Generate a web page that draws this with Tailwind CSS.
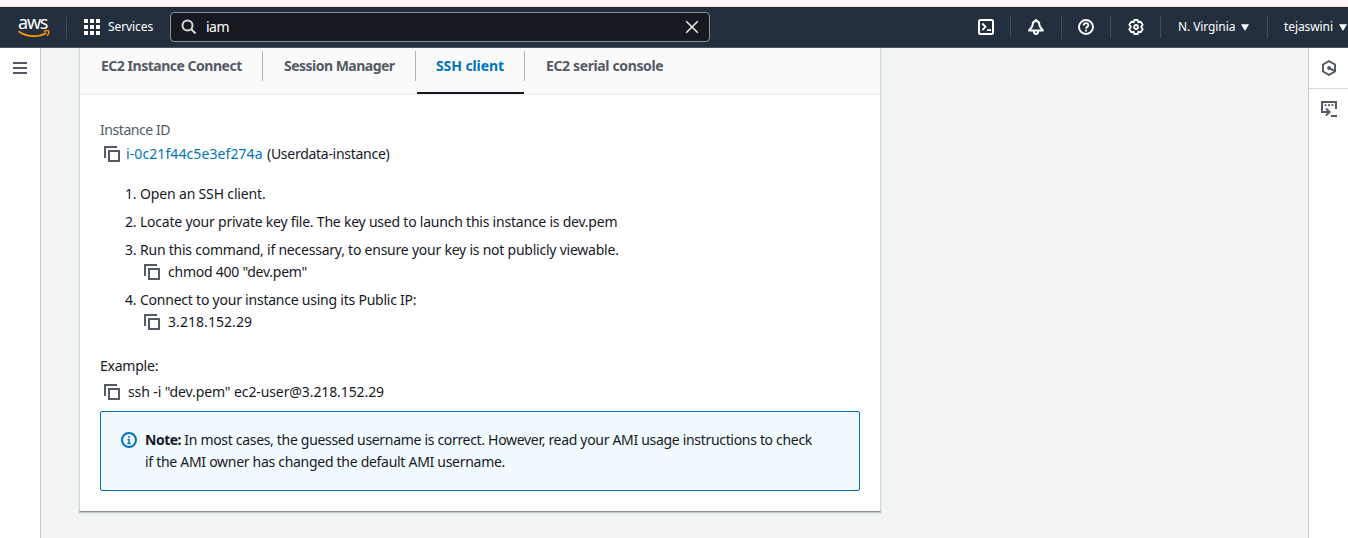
<!DOCTYPE html>
<html lang="en">
<head>
<meta charset="utf-8">
<title>Connect to instance</title>
<script src="https://cdn.jsdelivr.net/npm/@tailwindcss/browser@4"></script>
</head>
<body class="flex h-[538px] flex-col overflow-hidden bg-[#f2f3f3] font-['Noto_Sans','Open_Sans',sans-serif] text-sm leading-[22px] tracking-[-0.23px] text-[#16191f]">
<svg class="hidden">
  <symbol id="copy" viewBox="0 0 16 16"><path d="M1 12V1h12M5 5h10v10H5z" fill="none" stroke="#545b64" stroke-width="2"/></symbol>
</svg>

<div class="h-[7px] shrink-0 border-b border-[#f3e0cb] bg-[#fff7f5]"></div>

<header class="flex h-[41px] shrink-0 items-center border-b border-[#4b5563] bg-[#232f3e] text-xs tracking-[-0.09px] text-white">
  <div class="flex h-full w-[66px] shrink-0 flex-col pl-[18px] pt-[7px]">
    <span class="h-[16px] text-[18px] leading-[16px] tracking-[-1.2px]">aws</span>
    <svg class="-mt-[0.5px] h-[8px] w-[32px]" viewBox="0 0 32 8" fill="none" stroke="#f90"><path d="M.5 1.300C8.500 7.300 20 7.600 28.300 3" stroke-width="1.700"/><path d="M25.800 1.400c2-.8 4.400-.9 4.900-.2.300.9-.3 3.200-1.600 4.700" stroke-width="1.400"/></svg>
  </div>
  <div class="mt-px h-[22px] w-px shrink-0 bg-[#414d5c]"></div>
  <svg class="ml-[17px] h-4 w-4 shrink-0" viewBox="0 0 16 16" fill="#fff"><path d="M0 0h4v4H0zM6 0h4v4H6zM12 0h4v4h-4zM0 6h4v4H0zM6 6h4v4H6zM12 6h4v4h-4zM0 12h4v4H0zM6 12h4v4H6zM12 12h4v4h-4z"/></svg>
  <span class="ml-2 w-[62px] shrink-0">Services</span>
  <div class="flex h-[30px] w-[540px] shrink-0 items-center rounded-sm border border-[#879596] bg-[#16191f]">
    <svg class="ml-[10px] h-4 w-4" viewBox="0 0 16 16" fill="none" stroke="#d5dbdb" stroke-width="2"><circle cx="6.500" cy="6.500" r="5"/><path d="m10 10 4.500 4.500"/></svg>
    <span class="ml-[9px] flex-1 text-sm tracking-[-0.5px]">iam</span>
    <svg class="mr-[10px] h-[14px] w-[14px]" viewBox="0 0 14 14" fill="none" stroke="#e4e8e8" stroke-width="1.600"><path d="m1.200 1.200 11.600 11.600m0-11.600L1.200 12.800"/></svg>
  </div>
  <div class="ml-[268px] flex shrink-0 items-center">
    <svg class="h-4 w-4" viewBox="0 0 16 16" fill="none" stroke="#fff" stroke-width="2"><rect x="1" y="1" width="14" height="14" rx="1.500"/><path d="M4.300 4.500 7.500 7.800 4.300 11.200M9 11.200h4" stroke-width="1.800"/></svg>
    <div class="ml-4 h-[22px] w-px bg-[#414d5c]"></div>
    <svg class="ml-[17px] h-4 w-4" viewBox="0 0 16 16" fill="none" stroke="#fff" stroke-width="2" stroke-linejoin="round"><path d="M8 2C5.600 2 4.700 3.800 4.700 5.500 4.700 7.800 3 9 1 11.500h14C13 9 11.300 7.800 11.300 5.500 11.300 3.800 10.400 2 8 2z"/><path d="M8 0v2M5.800 12c0 4 4.400 4 4.400 0" stroke-width="1.800"/></svg>
    <div class="ml-[17px] h-[24px] w-px bg-[#414d5c]"></div>
    <svg class="ml-4 h-4 w-4" viewBox="0 0 16 16" fill="none" stroke="#fff" stroke-width="1.900"><circle cx="8" cy="8" r="7"/><path d="M5.700 6.500C5.700 3.300 10.400 3.500 10.400 6.200 10.400 8 8 7.800 8 9.800M8 10.700v1.800"/></svg>
    <div class="ml-4 h-[22px] w-px bg-[#414d5c]"></div>
    <svg class="ml-[17px] h-4 w-4" viewBox="0 0 16 16" fill="none" stroke="#fff" stroke-width="1.800" stroke-linejoin="round"><path d="M6.300 1h3.400l.6 2.300L12.700 2.700 14.700 5.700 13.100 8l1.600 2.300-2 3-2.400-.6L9.700 15H6.300l-.6-2.300-2.400.6-2-3L2.900 8 1.300 5.700l2-3 2.400.6z"/><circle cx="8" cy="8" r="2"/></svg>
    <div class="ml-4 h-[22px] w-px bg-[#414d5c]"></div>
    <span class="ml-[17px] w-[63px] whitespace-nowrap">N. Virginia</span>
    <svg class="h-[7px] w-[8px]" viewBox="0 0 8 7"><path d="M0 .3h8L4 7z" fill="#fff"/></svg>
    <div class="ml-[18px] h-[22px] w-px bg-[#414d5c]"></div>
    <span class="ml-4 w-[55px]">tejaswini</span>
    <svg class="h-[7px] w-[8px]" viewBox="0 0 8 7"><path d="M0 .3h8L4 7z" fill="#fff"/></svg>
  </div>
</header>

<div class="flex min-h-0 flex-1">
  <nav class="flex w-[41px] shrink-0 justify-center border-r border-[#c5cccc] bg-white pt-[14px]">
    <svg class="h-3 w-[14px]" viewBox="0 0 14 12" fill="#545b64"><path d="M0 0h14v2H0zM0 5h14v2H0zM0 10h14v2H0z"/></svg>
  </nav>

  <main class="flex-1 pl-[38px]">
    <section class="h-[464px] w-[802px] border-x border-b border-x-[#cfd4d5] border-b-[#879596] bg-white shadow-[0_1px_1px_rgba(0,28,36,0.2)]">
      <div class="flex h-[47px] border-b border-[#eaeded] bg-[#fafafa] font-bold text-[#545b64]">
        <div class="w-[182px] pl-[21px] pt-[7px] tracking-[-0.48px]">EC2 Instance Connect</div>
        <div class="mt-[3px] h-[30px] w-px bg-[#aab7b8]"></div>
        <div class="w-[152px] pl-[21px] pt-[7px] tracking-[-0.52px]">Session Manager</div>
        <div class="mt-[3px] h-[30px] w-px bg-[#aab7b8]"></div>
        <div class="ml-px h-[46px] w-[107px] border-b-2 border-[#16191f] pl-[19px] pt-[7px] tracking-[-0.1px] text-[#0073bb]">SSH client</div>
        <div class="mt-[3px] h-[30px] w-px bg-[#aab7b8]"></div>
        <div class="pl-[21px] pt-[7px] tracking-[-0.37px]">EC2 serial console</div>
      </div>

      <div class="px-5 pt-6">
        <div class="tracking-[-0.44px] text-[#545b64]">Instance ID</div>
        <div class="mt-0.5 flex items-center pl-1">
          <svg class="h-4 w-4"><use href="#copy"/></svg>
          <a class="ml-1.5 w-[141px] tracking-[0.09px] text-[#0073bb]">i-0c21f44c5e3ef274a</a>
          <span class="tracking-[-0.28px]">(Userdata-instance)</span>
        </div>

        <ol class="mt-[18px] flex flex-col gap-1.5 pl-[25px]">
          <li class="flex"><span class="w-[15px]">1.</span><span class="tracking-[-0.16px]">Open an SSH client.</span></li>
          <li class="flex"><span class="w-[15px]">2.</span><span class="tracking-[-0.22px]">Locate your private key file. The key used to launch this instance is dev.pem</span></li>
          <li class="flex"><span class="w-[15px]">3.</span>
            <div>
              <div>Run this command, if necessary, to ensure your key is not publicly viewable.</div>
              <div class="flex items-center gap-2 pl-1"><svg class="h-4 w-4"><use href="#copy"/></svg><span>chmod 400 "dev.pem"</span></div>
            </div>
          </li>
          <li class="flex"><span class="w-[15px]">4.</span>
            <div>
              <div>Connect to your instance using its Public IP:</div>
              <div class="flex items-center gap-2 pl-1"><svg class="h-4 w-4"><use href="#copy"/></svg><span class="tracking-[0.06px]">3.218.152.29</span></div>
            </div>
          </li>
        </ol>

        <div class="mt-[22px]">Example:</div>
        <div class="mt-1 flex items-center gap-2 pl-1"><svg class="h-4 w-4"><use href="#copy"/></svg><span class="tracking-[-0.1px]">ssh -i "dev.pem" ec2-user@3.218.152.29</span></div>

        <div class="mt-2 flex h-20 w-[760px] rounded-xs border border-[#0073bb] bg-[#f1faff] pl-5 pt-[17px]">
          <svg class="mt-[3px] h-4 w-4 shrink-0" viewBox="0 0 16 16" fill="none" stroke="#0073bb" stroke-width="2"><circle cx="8" cy="8" r="7"/><path d="M8 4v1.800M6.500 7.500H8v4M6.300 11.500h3.500" stroke-width="1.500"/></svg>
          <div class="ml-2 whitespace-nowrap tracking-[-0.315px]"><b class="tracking-[-0.5px]">Note:</b> In most cases, the guessed username is correct. However, read your AMI usage instructions to check<br><span class="tracking-[-0.29px]">if the AMI owner has changed the default AMI username.</span></div>
        </div>
      </div>
    </section>
  </main>

  <aside class="flex w-10 shrink-0 flex-col border-l border-[#c5cccc] bg-white">
    <div class="flex h-[41px] items-center justify-center border-b border-[#d5dbdb]">
      <svg class="h-4 w-4" viewBox="0 0 16 16" fill="none" stroke="#545b64" stroke-width="2"><path d="M8 1.100 14 4.500v7L8 14.900 2 11.500v-7z"/><circle cx="8" cy="8" r="1.900" fill="#545b64" stroke="none"/><path d="m8 8 6 3.200"/></svg>
    </div>
    <div class="flex h-10 items-center justify-center">
      <svg class="h-4 w-4" viewBox="0 0 16 16" fill="none" stroke="#545b64" stroke-width="2"><path d="M4 11H1V1h14v7"/><path d="M3.500 4.200h2M7 4.200h2M10.500 4.200h2" stroke-width="1.700"/><path d="M3 11h5M5 7.500 8.500 11 5 14.500M10 15h6"/></svg>
    </div>
  </aside>
</div>
</body>
</html>
